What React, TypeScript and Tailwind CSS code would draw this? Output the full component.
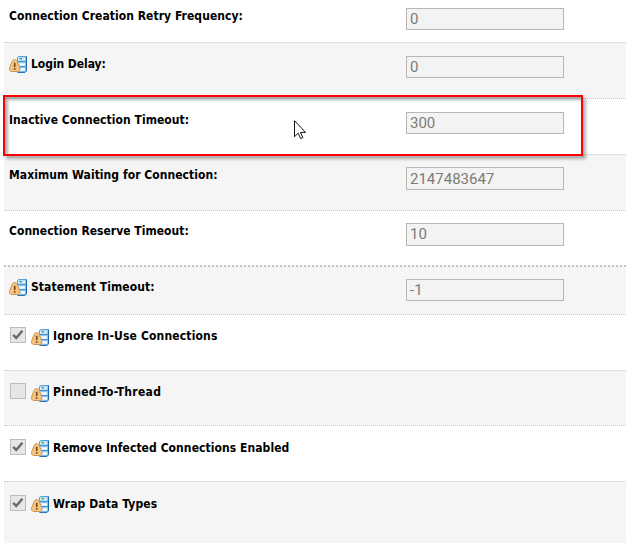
import React from "react";

type Row = {
  label: string;
  height: string;
  value?: string;
  checked?: boolean;
  icon?: boolean;
  pad: string;
  track: string;
  border: string;
  box?: string;
  iconTop?: string;
};

const rows: Row[] = [
  { label: "Connection Creation Retry Frequency:", value: "0", height: "h-[42px]", pad: "pt-[8px]", track: "tracking-[0.05px]", border: "", box: "h-[22px] leading-[21px]" },
  { label: "Login Delay:", value: "0", icon: true, height: "h-[56px]", pad: "pt-[13px]", track: "tracking-[-0.05px]", border: "border-t", box: "h-[22px] leading-[21px]" },
  { label: "Inactive Connection Timeout:", value: "300", height: "h-[56px]", pad: "pt-[13px]", track: "tracking-[0.05px]", border: "border-t", box: "h-[22px] leading-[21px]" },
  { label: "Maximum Waiting for Connection:", value: "2147483647", height: "h-[56px]", pad: "pt-[12px]", track: "tracking-[0.05px]", border: "border-t", box: "h-[23px] leading-[23px]" },
  { label: "Connection Reserve Timeout:", value: "10", height: "h-[55px]", pad: "pt-[12px]", track: "tracking-[0.02px]", border: "border-t", box: "h-[23px] leading-[21px]" },
  { label: "Statement Timeout:", value: "-1", icon: true, height: "h-[49px]", pad: "pt-[12px]", track: "tracking-[0.09px]", border: "border-t-2", box: "h-[22px] leading-[21px]" },
  { label: "Ignore In-Use Connections", checked: true, icon: true, height: "h-[56px]", pad: "pt-[12px]", track: "tracking-[0.16px] mt-px", border: "border-t", iconTop: "mt-[2px]" },
  { label: "Pinned-To-Thread", checked: false, icon: true, height: "h-[55px]", pad: "pt-[12px]", track: "tracking-[0.3px] mt-px", border: "border-t", iconTop: "mt-[2px]" },
  { label: "Remove Infected Connections Enabled", checked: true, icon: true, height: "h-[56px]", pad: "pt-[13px]", track: "tracking-[0.07px] mt-px", border: "border-t", iconTop: "mt-[1px]" },
  { label: "Wrap Data Types", checked: true, icon: true, height: "h-[62px]", pad: "pt-[13px]", track: "tracking-[0.1px] mt-px", border: "border-t", iconTop: "mt-[1px]" },
];

function RestartIcon({ className = "" }: { className?: string }) {
  return (
    <svg className={`mr-1 h-[17px] w-[18px] shrink-0 ${className}`} viewBox="0 0 18 17">
      <path d="M8 1.5 9.5.5h8v14.5l-1.5 1.5H8z" fill="#8cc6f0" />
      <path d="M9 1.5h7v3H9zM9 7h7v3H9zM9 12h7v3H9z" fill="#d9effc" />
      <path d="M8.5 5V1.5l1-1h8" stroke="#5c9fd4" fill="none" />
      <path d="M9 5.5h8M9 10.5h8" stroke="#4a94d2" />
      <path d="M8.5 16.4H16l1.5-1.5V.5" stroke="#1b66ad" fill="none" />
      <path d="M10 2h3v1.5h-2z" fill="#39ad68" />
      <path d="M12 8.5h4M12 13.5h4" stroke="#fff" />
      <path d="M5.7 3.6c-1.5 0-2.3.8-2.6 1.9L.8 11.3c-.8 2.4.1 4.2 2.1 4.2h5.6c2 0 2.9-1.8 2.1-3.9L8.3 5.5c-.4-1.2-1.1-1.9-2.6-1.9z" fill="#f5c581" stroke="#cf9550" />
      <path d="M5.7 6.7v4.4M5.7 12v1.8" stroke="#7a4e1c" strokeWidth="1.7" />
    </svg>
  );
}

function Checkbox({ checked }: { checked: boolean }) {
  return (
    <span role="checkbox" aria-checked={checked} aria-disabled="true" className="ml-px mr-[5px] h-4 w-4 shrink-0 border border-[#bcbcbc] bg-[#e6e6e6]">
      {checked && (
        <svg className="block h-[14px] w-[14px]" viewBox="0 0 14 14">
          <path d="m2.2 6.8 3 3.2 6.2-7.2" fill="none" stroke="#6b6b6b" strokeWidth="2.5" />
        </svg>
      )}
    </span>
  );
}

export default function App() {
  return (
    <main className="relative h-[543px] w-[626px] overflow-hidden bg-white pl-1">
      {rows.map((r, i) => (
        <section key={r.label} className={`flex border-dotted border-[#c6c6c6] pl-[5px] ${r.height} ${r.pad} ${r.border} ${i % 2 ? "bg-[#f5f5f5]" : "bg-white"}`}>
          <div className="flex w-[397px] items-start">
            {r.checked !== undefined && <Checkbox checked={r.checked} />}
            {r.icon && <RestartIcon className={r.iconTop} />}
            <label className={`whitespace-nowrap font-['DejaVu_Sans_Condensed','DejaVu_Sans',sans-serif] text-[12px] font-bold leading-4 text-black [font-stretch:75%] ${r.track}`}>{r.label}</label>
          </div>
          {r.value !== undefined && (
            <div className={`w-[158px] border border-[#b8b7b2] bg-[#f3f3f3] pl-[3px] font-[Roboto,sans-serif] text-[15px] text-[#7d7b75] ${r.box}`}>{r.value}</div>
          )}
        </section>
      ))}
      <div className="pointer-events-none absolute left-[3px] top-[95px] h-[61px] w-[580px] border-2 border-[#fb0000] shadow-[3px_3px_3px_rgba(0,0,0,0.3),inset_3px_3px_3px_rgba(0,0,0,0.3)]" />
      <svg className="pointer-events-none absolute left-[294px] top-[120px] h-[20px] w-[13px]" viewBox="0 0 13 20">
        <path d="M.5.7v16l3.7-3.5 2.5 5.4 2.2-1-2.4-5.2h5.1z" fill="#fff" stroke="#111118" />
      </svg>
    </main>
  );
}
